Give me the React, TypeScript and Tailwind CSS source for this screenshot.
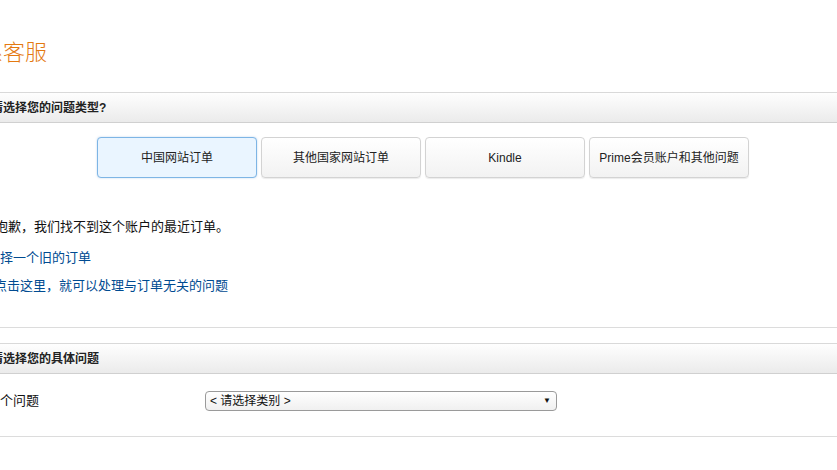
import React from "react";

const font = { fontFamily: '"Liberation Sans", Arial, "Noto Sans CJK SC", sans-serif' };

function Header({ children }: { children: React.ReactNode }) {
  return (
    <div className="h-[31px] border-t border-b border-t-[#d9d9d9] border-b-[#d0d0d0] bg-gradient-to-b from-[#fefefe] to-[#ebebeb] flex items-center">
      <span className="ml-[-9px] text-[12px] font-bold text-[#222]">{children}</span>
    </div>
  );
}

const tabs = ["中国网站订单", "其他国家网站订单", "Kindle", "Prime会员账户和其他问题"];

export default function App() {
  return (
    <div className="w-[837px] h-[470px] overflow-hidden bg-white text-[#111]" style={font}>
      <div className="h-[92px] pt-[40px]">
        <div className="ml-[-41px] text-[22px] leading-[26px] text-[#e47911] font-light whitespace-nowrap">联系客服</div>
      </div>
      <Header>请选择您的问题类型?</Header>
      <div className="flex gap-[4px] ml-[97px] mt-[14px]">
        {tabs.map((t, i) => (
          <div
            key={t}
            className={
              "w-[160px] h-[41px] rounded-[4px] flex items-center justify-center text-[12px] text-[#222] " +
              (i === 0
                ? "bg-[#eaf5ff] border border-[#7eb5e5] shadow-[0_0_2px_rgba(120,170,220,0.5)]"
                : "bg-gradient-to-b from-[#ffffff] to-[#f2f2f2] border border-[#d3d3d3] shadow-[0_1px_1px_rgba(0,0,0,0.08)]")
            }
          >
            {t}
          </div>
        ))}
      </div>
      <div className="mt-[40px] ml-[-5px] text-[13px] leading-[18px] whitespace-nowrap">抱歉，我们找不到这个账户的最近订单。</div>
      <div className="mt-[13px] ml-[-13px] text-[13px] leading-[18px] text-[#004b91] whitespace-nowrap">选择一个旧的订单</div>
      <div className="mt-[10px] ml-[-6px] text-[13px] leading-[18px] text-[#004b91] whitespace-nowrap">点击这里，就可以处理与订单无关的问题</div>
      <div className="mt-[32px] border-t border-[#dcdcdc]"></div>
      <div className="mt-[15px]">
        <Header>请选择您的具体问题</Header>
      </div>
      <div className="h-[62px] flex items-center pb-[9px]">
        <div className="w-[205px] ml-[-39px] text-[13px] whitespace-nowrap">
          <span className="inline-block w-[244px]">选择一个问题</span>
        </div>
        <div className="ml-[39px] w-[352px] h-[20px] rounded-[4px] border border-[#9a9a9a] bg-gradient-to-b from-[#ffffff] to-[#f0f0f0] flex items-center justify-between pl-[4px] pr-[5px] text-[12px] text-[#111]">
          <span>&lt; 请选择类别 &gt;</span>
          <span className="text-[8px]">▼</span>
        </div>
      </div>
      <div className="border-t border-[#dcdcdc]"></div>
    </div>
  );
}
